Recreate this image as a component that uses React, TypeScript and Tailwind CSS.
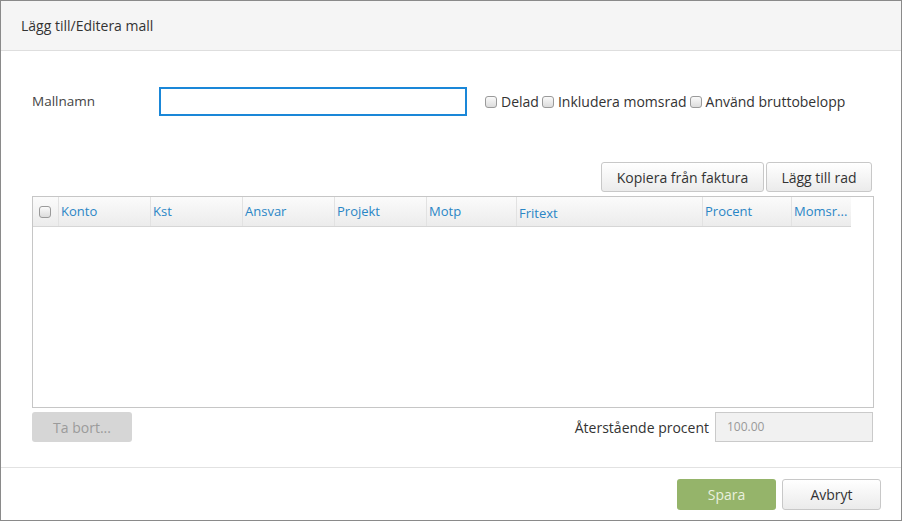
import React from "react";

const font = { fontFamily: '"Open Sans", "Liberation Sans", sans-serif' };

const cols = [
  { label: "Konto", w: "w-[92px]" },
  { label: "Kst", w: "w-[92px]" },
  { label: "Ansvar", w: "w-[92px]" },
  { label: "Projekt", w: "w-[92px]" },
  { label: "Motp", w: "w-[90px]" },
  { label: "Fritext", w: "w-[186px]", low: true },
  { label: "Procent", w: "w-[89px]" },
  { label: "Momsr...", w: "w-[59px]" },
];

function Box() {
  return (
    <span className="inline-block h-[12px] w-[12px] rounded-[3px] border border-[#9a9a9a] bg-gradient-to-b from-[#fafafa] to-[#dcdcdc]" />
  );
}

export default function App() {
  return (
    <div className="h-[521px] w-[902px] bg-white" style={font}>
      <div className="flex h-[521px] w-[902px] flex-col border border-[#8a8a8a] bg-white">
        {/* header */}
        <div className="flex h-[50px] items-center border-b border-[#dedede] bg-[#f5f5f5] pl-[20px] text-[14px] text-[#333]">
          Lägg till/Editera mall
        </div>

        <div className="flex flex-1 flex-col pl-[31px] pr-[26px]">
          {/* name row */}
          <div className="mt-[36px] flex items-center">
            <span className="w-[127px] text-[13.5px] text-[#444]">Mallnamn</span>
            <div className="h-[29px] w-[308px] border-2 border-[#1a87d8] bg-white" />
            <div className="ml-[18px] flex items-center text-[14px] text-[#333]">
              <Box />
              <span className="ml-[4px]">Delad</span>
              <span className="ml-[3px] flex"><Box /></span>
              <span className="ml-[4px]">Inkludera momsrad</span>
              <span className="ml-[3px] flex"><Box /></span>
              <span className="ml-[4px]">Använd bruttobelopp</span>
            </div>
          </div>

          {/* buttons */}
          <div className="mt-[46px] flex justify-end gap-[2px] pr-[3px]">
            <button className="h-[30px] w-[163px] rounded-[3px] border border-[#c8c8c8] bg-gradient-to-b from-[#ffffff] to-[#ebebeb] text-[14px] text-[#333]">
              Kopiera från faktura
            </button>
            <button className="h-[30px] w-[106px] rounded-[3px] border border-[#c8c8c8] bg-gradient-to-b from-[#ffffff] to-[#ebebeb] text-[14px] text-[#333]">
              Lägg till rad
            </button>
          </div>

          {/* table */}
          <div className="mt-[4px] h-[212px] w-[842px] border border-[#c6c6c6] bg-white">
            <div className="flex h-[30px] w-[818px] border-b border-[#d6d6d6] bg-gradient-to-b from-[#fbfbfb] to-[#ececec] text-[13px] text-[#2a86c6]">
              <div className="flex w-[26px] items-center justify-center border-r border-[#e2e2e2] pr-[2px]">
                <Box />
              </div>
              {cols.map((c, i) => (
                <div
                  key={c.label}
                  className={`${c.w} flex items-center pl-[2px] ${i < cols.length - 1 ? "border-r border-[#e2e2e2]" : ""} ${c.low ? "pt-[4px]" : ""}`}
                >
                  {c.label}
                </div>
              ))}
            </div>
          </div>

          {/* bottom row */}
          <div className="mt-[4px] flex items-center">
            <button className="h-[30px] w-[100px] rounded-[3px] bg-[#d6d6d6] text-[14px] text-[#9b9b9b]">
              Ta bort...
            </button>
            <span className="ml-auto text-[14px] text-[#333]">Återstående procent</span>
            <div className="ml-[6px] mr-[2px] flex h-[30px] w-[158px] items-center border border-[#cacaca] bg-[#f1f1f1] pl-[11px] text-[12px] text-[#999]">
              100.00
            </div>
          </div>
        </div>

        {/* footer */}
        <div className="flex h-[53px] items-center justify-end gap-[6px] border-t border-[#e2e2e2] pr-[20px]">
          <button className="h-[31px] w-[99px] rounded-[3px] bg-[#95b46a] text-[14px] text-[#e9f0df]">
            Spara
          </button>
          <button className="h-[31px] w-[99px] rounded-[3px] border border-[#c8c8c8] bg-gradient-to-b from-[#ffffff] to-[#ebebeb] text-[14px] text-[#333]">
            Avbryt
          </button>
        </div>
      </div>
    </div>
  );
}
